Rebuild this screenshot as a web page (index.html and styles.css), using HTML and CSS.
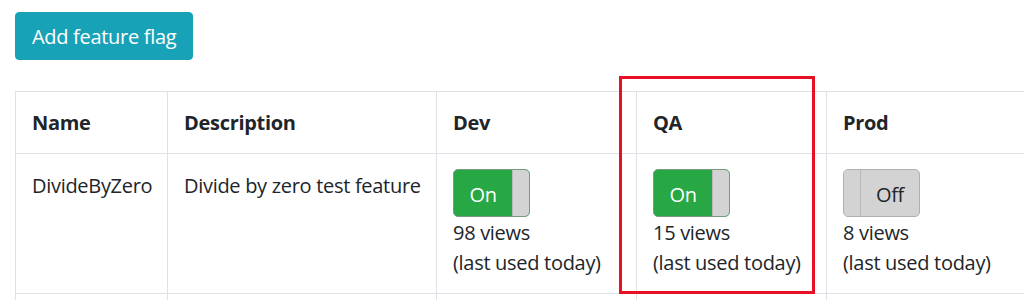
FILE: index.html
```html
<!DOCTYPE html>
<html lang="en">
<head>
  <meta charset="UTF-8">
  <title>Feature flags</title>
  <link rel="stylesheet" href="styles.css">
</head>
<body>
  <main class="page">
    <button class="add-button">Add feature flag</button>

    <table class="flags">
      <thead>
        <tr>
          <th class="col-name">Name</th>
          <th class="col-desc">Description</th>
          <th class="col-dev">Dev</th>
          <th class="col-qa">QA</th>
          <th class="col-prod">Prod</th>
        </tr>
      </thead>
      <tbody>
        <tr>
          <td class="text-cell">DivideByZero</td>
          <td class="text-cell">Divide by zero test feature</td>
          <td>
            <div class="toggle on"><span class="toggle-label">On</span><span class="toggle-handle"></span></div>
            <div class="views">98 views</div>
            <div class="views">(last used today)</div>
          </td>
          <td>
            <div class="toggle on"><span class="toggle-label">On</span><span class="toggle-handle"></span></div>
            <div class="views">15 views</div>
            <div class="views">(last used today)</div>
          </td>
          <td>
            <div class="toggle off"><span class="toggle-handle"></span><span class="toggle-label">Off</span></div>
            <div class="views">8 views</div>
            <div class="views">(last used today)</div>
          </td>
        </tr>
        <tr class="next-row">
          <td></td><td></td><td></td><td></td><td></td>
        </tr>
      </tbody>
    </table>

    <div class="highlight"></div>
  </main>
</body>
</html>
```

FILE: styles.css
```css
:root {
  --text-color: #212529;
  --border-color: #dee2e6;
  --info-color: #17a2b8;
  --success-color: #28a745;
  --handle-color: #d3d3d3;
  --mark-color: #e81123;
}

* {
  box-sizing: border-box;
}

body {
  margin: 0;
  overflow: hidden;
  font-family: "Open Sans", "Noto Sans", Arial, sans-serif;
  font-size: 20px;
  line-height: 30px;
  letter-spacing: -0.3px;
  color: var(--text-color);
  background: #ffffff;
}

.page {
  position: relative;
  padding: 12px 0 0 15px;
}

.add-button {
  display: block;
  height: 48px;
  padding: 1px 16px 0;
  border: 1px solid var(--info-color);
  border-radius: 4px;
  background: var(--info-color);
  color: #ffffff;
  font-family: inherit;
  font-size: 20px;
  line-height: 30px;
  letter-spacing: -0.3px;
}

.flags {
  margin-top: 31px;
  border-collapse: collapse;
  table-layout: fixed;
  width: 1100px;
}

.flags th,
.flags td {
  border: 1px solid var(--border-color);
  padding: 15px 16px 14px;
  text-align: left;
  vertical-align: top;
  white-space: nowrap;
}

.flags th {
  padding-top: 16px;
  padding-bottom: 14px;
  font-weight: 700;
}

.col-name { width: 152px; }
.col-desc { width: 269px; }
.col-dev { width: 200px; }
.col-qa { width: 190px; }
.col-prod { width: 289px; }

.flags thead tr {
  height: 62px;
}

.flags tbody tr:first-child {
  height: 140px;
}

.flags .text-cell {
  padding-top: 17px;
}

.next-row td {
  height: 6px;
  padding: 0;
  border-bottom: none;
}

.toggle {
  display: flex;
  width: 77px;
  height: 48px;
  border: 1px solid #b0b0b0;
  border-radius: 5px;
  overflow: hidden;
}

.toggle.on {
  background: var(--success-color);
  border-color: #7a9a7f;
  color: #ffffff;
}

.toggle.off {
  background: var(--handle-color);
  color: var(--text-color);
}

.toggle-label {
  flex: 1;
  display: flex;
  align-items: center;
  justify-content: center;
  padding-top: 3px;
}

.toggle-handle {
  width: 17px;
  background: var(--handle-color);
  border-left: 1px solid #b8b8b8;
  border-radius: 0 4px 4px 0;
}

.toggle.off .toggle-handle {
  border-left: none;
  border-right: 1px solid #b8b8b8;
  border-radius: 4px 0 0 4px;
}

.views {
  position: relative;
  top: 1px;
}

.highlight {
  position: absolute;
  left: 619px;
  top: 76px;
  width: 196px;
  height: 218px;
  border: 3px solid var(--mark-color);
}
```
